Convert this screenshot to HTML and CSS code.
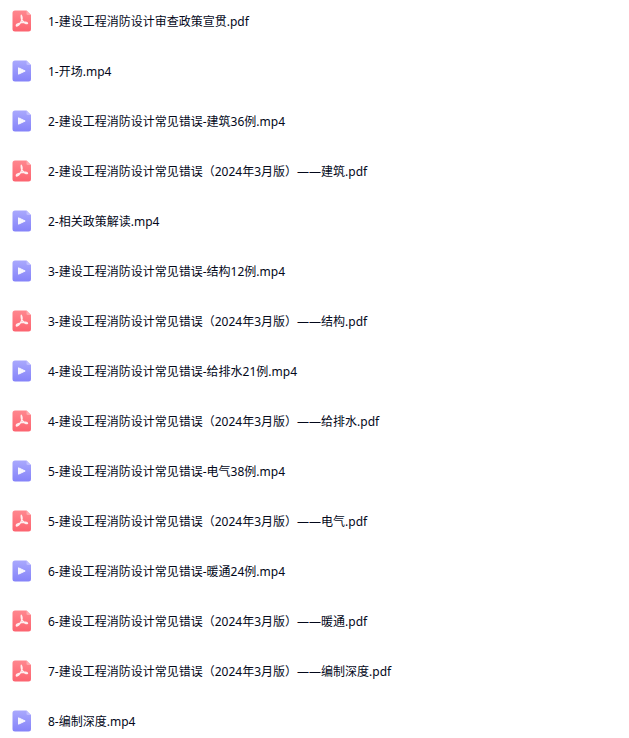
FILE: index.html
```html
<!DOCTYPE html>
<html lang="zh-CN">
<head>
    <meta charset="UTF-8">
    <meta name="viewport" content="width=device-width, initial-scale=1">
    <title>建设工程消防设计</title>
    <link rel="stylesheet" href="styles.css">
</head>
<body>
    <!-- file type icons -->
    <svg class="sprite" aria-hidden="true">
        <defs>
            <linearGradient id="red" x1="0" y1="0" x2="0" y2="1">
                <stop offset="0" stop-color="#ff878e"/>
                <stop offset="1" stop-color="#fc6470"/>
            </linearGradient>
            <linearGradient id="purple" x1="0" y1="0" x2="0" y2="1">
                <stop offset="0" stop-color="#a9a8fd"/>
                <stop offset="1" stop-color="#8583f9"/>
            </linearGradient>
        </defs>
        <symbol id="pdf" viewBox="0 0 20 22">
            <path fill="url(#red)" d="M3 0.500h11.500l4.500 4.500v14a2.500 2.500 0 0 1-2.500 2.500H3a2.500 2.500 0 0 1-2.500-2.500V3A2.500 2.500 0 0 1 3 0.500z"/>
            <path fill="#ffa9ae" d="M14.500 0.500L19 5h-3.200a1.300 1.300 0 0 1-1.300-1.300z"/>
            <path fill="none" stroke="#ffeeef" stroke-width="1.400" stroke-linecap="round" stroke-linejoin="round" d="M9.300 5.300c1 1.600 1 4.200-.4 6.700-1.200 2.300-3.300 4.500-4.400 3.900-.9-.9 1.500-2.600 5-3.300 2.900-.6 5.900-.4 6 .6 0 .9-2.500.3-4.200-1.400-1.600-1.600-2.300-4.200-2-6.500z"/>
        </symbol>
        <symbol id="video" viewBox="0 0 20 22">
            <path fill="url(#purple)" d="M3 0.500h11.500l4.500 4.500v14a2.500 2.500 0 0 1-2.500 2.500H3a2.500 2.500 0 0 1-2.500-2.500V3A2.500 2.500 0 0 1 3 0.500z"/>
            <path fill="#bfbdff" d="M14.500 0.500L19 5h-3.200a1.300 1.300 0 0 1-1.300-1.300z"/>
            <path fill="#f6f5ff" stroke="#f6f5ff" stroke-linejoin="round" d="M6.500 7.800v6.400l6.700-3.200z"/>
        </symbol>
    </svg>

    <ul class="file-list">
        <li class="file"><svg class="icon"><use href="#pdf"/></svg><span class="name">1-建设工程消防设计审查政策宣贯.pdf</span></li>
        <li class="file"><svg class="icon"><use href="#video"/></svg><span class="name">1-开场.mp4</span></li>
        <li class="file"><svg class="icon"><use href="#video"/></svg><span class="name">2-建设工程消防设计常见错误-建筑36例.mp4</span></li>
        <li class="file"><svg class="icon"><use href="#pdf"/></svg><span class="name">2-建设工程消防设计常见错误（2024年3月版）——建筑.pdf</span></li>
        <li class="file"><svg class="icon"><use href="#video"/></svg><span class="name">2-相关政策解读.mp4</span></li>
        <li class="file"><svg class="icon"><use href="#video"/></svg><span class="name">3-建设工程消防设计常见错误-结构12例.mp4</span></li>
        <li class="file"><svg class="icon"><use href="#pdf"/></svg><span class="name">3-建设工程消防设计常见错误（2024年3月版）——结构.pdf</span></li>
        <li class="file"><svg class="icon"><use href="#video"/></svg><span class="name">4-建设工程消防设计常见错误-给排水21例.mp4</span></li>
        <li class="file"><svg class="icon"><use href="#pdf"/></svg><span class="name">4-建设工程消防设计常见错误（2024年3月版）——给排水.pdf</span></li>
        <li class="file"><svg class="icon"><use href="#video"/></svg><span class="name">5-建设工程消防设计常见错误-电气38例.mp4</span></li>
        <li class="file"><svg class="icon"><use href="#pdf"/></svg><span class="name">5-建设工程消防设计常见错误（2024年3月版）——电气.pdf</span></li>
        <li class="file"><svg class="icon"><use href="#video"/></svg><span class="name">6-建设工程消防设计常见错误-暖通24例.mp4</span></li>
        <li class="file"><svg class="icon"><use href="#pdf"/></svg><span class="name">6-建设工程消防设计常见错误（2024年3月版）——暖通.pdf</span></li>
        <li class="file"><svg class="icon"><use href="#pdf"/></svg><span class="name">7-建设工程消防设计常见错误（2024年3月版）——编制深度.pdf</span></li>
        <li class="file"><svg class="icon"><use href="#video"/></svg><span class="name">8-编制深度.mp4</span></li>
    </ul>
</body>
</html>
```

FILE: styles.css
```css
body {
    margin: 0;
    background-color: #fff;
    color: #03081a;
    font-family: "Noto Sans", "Noto Sans CJK SC", sans-serif;
    font-size: 12px;
    line-height: 18px;
}
.sprite {
    display: block;
    width: 0;
    height: 0;
}
.file-list {
    display: flex;
    flex-direction: column;
    gap: 16px;
    margin: 0;
    padding: 4px 12px 0;
    list-style: none;
}
.file {
    display: flex;
    align-items: center;
    gap: 16px;
    min-height: 34px;
}
.icon {
    flex: none;
    width: 20px;
    height: 22px;
}
.name {
    padding-top: 2px;
}
```
